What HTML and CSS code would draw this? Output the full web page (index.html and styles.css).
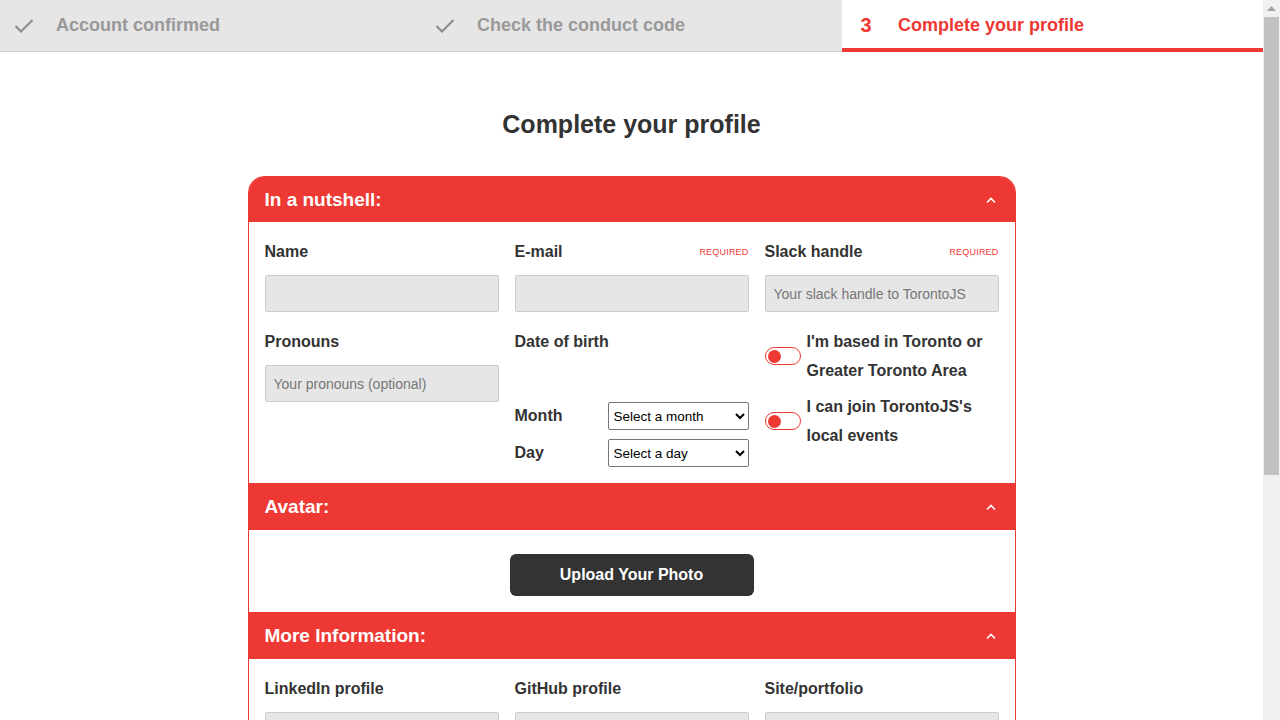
FILE: index.html
```html
<!DOCTYPE html>
<html lang="en">
<head>
<meta charset="utf-8">
<title>Complete your profile</title>
<link rel="stylesheet" href="styles.css">
</head>
<body>
<nav class="steps">
  <div class="step done">
    <span class="step-icon"><svg width="20" height="16" viewBox="0 0 20 16"><polyline points="1.5,8 7,13.5 18.5,2" fill="none" stroke="#8a8a8a" stroke-width="2"/></svg></span>
    <span class="step-text">Account confirmed</span>
  </div>
  <div class="step done">
    <span class="step-icon"><svg width="20" height="16" viewBox="0 0 20 16"><polyline points="1.5,8 7,13.5 18.5,2" fill="none" stroke="#8a8a8a" stroke-width="2"/></svg></span>
    <span class="step-text">Check the conduct code</span>
  </div>
  <div class="step active">
    <span class="step-icon step-num">3</span>
    <span class="step-text">Complete your profile</span>
  </div>
</nav>

<main class="page">
  <h1 class="title">Complete your profile</h1>

  <form class="card">
    <section class="section">
      <header class="section-head">
        <h2>In a nutshell:</h2>
        <svg class="chev" width="12" height="8" viewBox="0 0 12 8"><polyline points="2,6.5 6,2.5 10,6.5" fill="none" stroke="#fff" stroke-width="1.6"/></svg>
      </header>
      <div class="section-body grid3">
        <div class="field">
          <div class="label-row"><label>Name</label></div>
          <input class="input" type="text">
        </div>
        <div class="field">
          <div class="label-row"><label>E-mail</label><span class="req">REQUIRED</span></div>
          <input class="input" type="text">
        </div>
        <div class="field">
          <div class="label-row"><label>Slack handle</label><span class="req">REQUIRED</span></div>
          <input class="input" type="text" placeholder="Your slack handle to TorontoJS">
        </div>
        <div class="field">
          <div class="label-row"><label>Pronouns</label></div>
          <input class="input" type="text" placeholder="Your pronouns (optional)">
        </div>
        <div class="field">
          <div class="label-row"><label>Date of birth</label></div>
          <div class="dob">
            <div class="dob-row">
              <span class="dob-label">Month</span>
              <select class="select"><option>Select a month</option></select>
            </div>
            <div class="dob-row">
              <span class="dob-label">Day</span>
              <select class="select"><option>Select a day</option></select>
            </div>
          </div>
        </div>
        <div class="field toggles">
          <div class="toggle-row">
            <span class="toggle"><span class="knob"></span></span>
            <span class="toggle-text">I'm based in Toronto or Greater Toronto Area</span>
          </div>
          <div class="toggle-row">
            <span class="toggle"><span class="knob"></span></span>
            <span class="toggle-text">I can join TorontoJS's local events</span>
          </div>
        </div>
      </div>
    </section>

    <section class="section">
      <header class="section-head">
        <h2>Avatar:</h2>
        <svg class="chev" width="12" height="8" viewBox="0 0 12 8"><polyline points="2,6.5 6,2.5 10,6.5" fill="none" stroke="#fff" stroke-width="1.6"/></svg>
      </header>
      <div class="section-body avatar-body">
        <button type="button" class="btn-dark">Upload Your Photo</button>
      </div>
    </section>

    <section class="section">
      <header class="section-head">
        <h2>More Information:</h2>
        <svg class="chev" width="12" height="8" viewBox="0 0 12 8"><polyline points="2,6.5 6,2.5 10,6.5" fill="none" stroke="#fff" stroke-width="1.6"/></svg>
      </header>
      <div class="section-body grid3">
        <div class="field">
          <div class="label-row"><label>LinkedIn profile</label></div>
          <input class="input" type="text">
        </div>
        <div class="field">
          <div class="label-row"><label>GitHub profile</label></div>
          <input class="input" type="text">
        </div>
        <div class="field">
          <div class="label-row"><label>Site/portfolio</label></div>
          <input class="input" type="text">
        </div>
      </div>
    </section>
  </form>
</main>

<div class="scrollbar" aria-hidden="true">
  <div class="sb-arrow"><svg width="9" height="5" viewBox="0 0 9 5"><polygon points="0,5 4.5,0 9,5" fill="#a3a3a3"/></svg></div>
  <div class="sb-thumb"></div>
</div>
</body>
</html>
```

FILE: styles.css
```css
* { box-sizing: border-box; }

html, body {
  margin: 0;
  padding: 0;
  background: #fff;
  font-family: "Liberation Sans", Arial, sans-serif;
  color: #333;
}

body {
  padding-right: 17px;
  height: 720px;
  overflow: hidden;
}

.steps {
  display: flex;
  height: 52px;
  background: #e6e6e6;
  border-bottom: 1px solid #cccccc;
}

.step {
  flex: 1 1 0;
  display: flex;
  align-items: center;
  padding-left: 12px;
  gap: 20px;
  font-size: 18px;
  font-weight: bold;
  color: #999;
}

.step.active {
  background: #fff;
  color: #ee3833;
  border-bottom: 4px solid #ee3833;
  margin-bottom: -1px;
  padding-top: 2px;
}

.step-icon {
  width: 24px;
  display: flex;
  justify-content: center;
  align-items: center;
}

.step-num {
  font-size: 20px;
  font-weight: bold;
}

.page {
  padding: 58px 0 40px;
}

.title {
  margin: 0 0 38px;
  text-align: center;
  font-size: 25px;
  line-height: 28px;
  font-weight: bold;
  color: #333;
}

.card {
  width: 768px;
  margin: 0 auto;
  border: 1px solid #ee3833;
  border-radius: 16px 16px 6px 6px;
  overflow: hidden;
  background: #fff;
}

.section-head {
  height: 47px;
  background: #ee3833;
  display: flex;
  align-items: center;
  justify-content: space-between;
  padding: 0 18px 0 16px;
}

.section:first-child .section-head {
  height: 45px;
}

.section-head h2 {
  margin: 0;
  font-size: 19px;
  font-weight: bold;
  color: #fff;
}

.section-body {
  padding: 16px;
}

.grid3 {
  display: grid;
  grid-template-columns: repeat(3, 1fr);
  column-gap: 16px;
  row-gap: 16px;
}

.field {
  display: flex;
  flex-direction: column;
}

.label-row {
  display: flex;
  justify-content: space-between;
  align-items: center;
  height: 27px;
  margin-bottom: 10px;
}

.label-row label {
  font-size: 16px;
  font-weight: bold;
  color: #333;
}

.req {
  font-size: 9px;
  color: #ee3833;
  letter-spacing: 0.2px;
}

.input {
  height: 37px;
  width: 100%;
  background: #e6e6e6;
  border: 1px solid #cccccc;
  border-radius: 2px;
  padding: 0 8px;
  font-family: "Liberation Sans", Arial, sans-serif;
  font-size: 14px;
  color: #333;
}

.input::placeholder {
  color: #777;
}

.dob {
  display: flex;
  flex-direction: column;
  gap: 9px;
  margin-top: 37px;
}

.dob-row {
  display: flex;
  align-items: center;
  justify-content: space-between;
  height: 28px;
}

.dob-label {
  font-size: 16px;
  font-weight: bold;
  color: #333;
}

.select {
  width: 141px;
  height: 28px;
  font-family: "Liberation Sans", Arial, sans-serif;
  font-size: 13.5px;
  color: #000;
  background: #fff;
  border: 1px solid #767676;
  border-radius: 2px;
  padding: 0 1px;
}

.toggles {
  gap: 7px;
  margin-top: -1px;
}

.toggle-row {
  display: flex;
  align-items: center;
  gap: 6px;
}

.toggle {
  flex: none;
  width: 36px;
  height: 18px;
  border: 1px solid #ee3833;
  border-radius: 9px;
  background: #fff;
  display: flex;
  align-items: center;
  padding-left: 2px;
}

.knob {
  width: 13px;
  height: 13px;
  border-radius: 50%;
  background: #ee3833;
}

.toggle-text {
  font-size: 16px;
  font-weight: bold;
  line-height: 29px;
  color: #333;
}

.avatar-body {
  display: flex;
  justify-content: center;
  padding: 24px 16px 16px;
}

.btn-dark {
  width: 244px;
  height: 42px;
  border: none;
  border-radius: 6px;
  background: #333;
  color: #fff;
  font-family: "Liberation Sans", Arial, sans-serif;
  font-size: 16px;
  font-weight: bold;
  cursor: pointer;
}

.scrollbar {
  position: fixed;
  top: 0;
  right: 0;
  width: 17px;
  height: 720px;
  background: #f1f1f1;
  display: flex;
  flex-direction: column;
  align-items: center;
}

.sb-arrow {
  height: 17px;
  display: flex;
  align-items: center;
  justify-content: center;
}

.sb-thumb {
  width: 15px;
  height: 458px;
  background: #c1c1c1;
}
```
